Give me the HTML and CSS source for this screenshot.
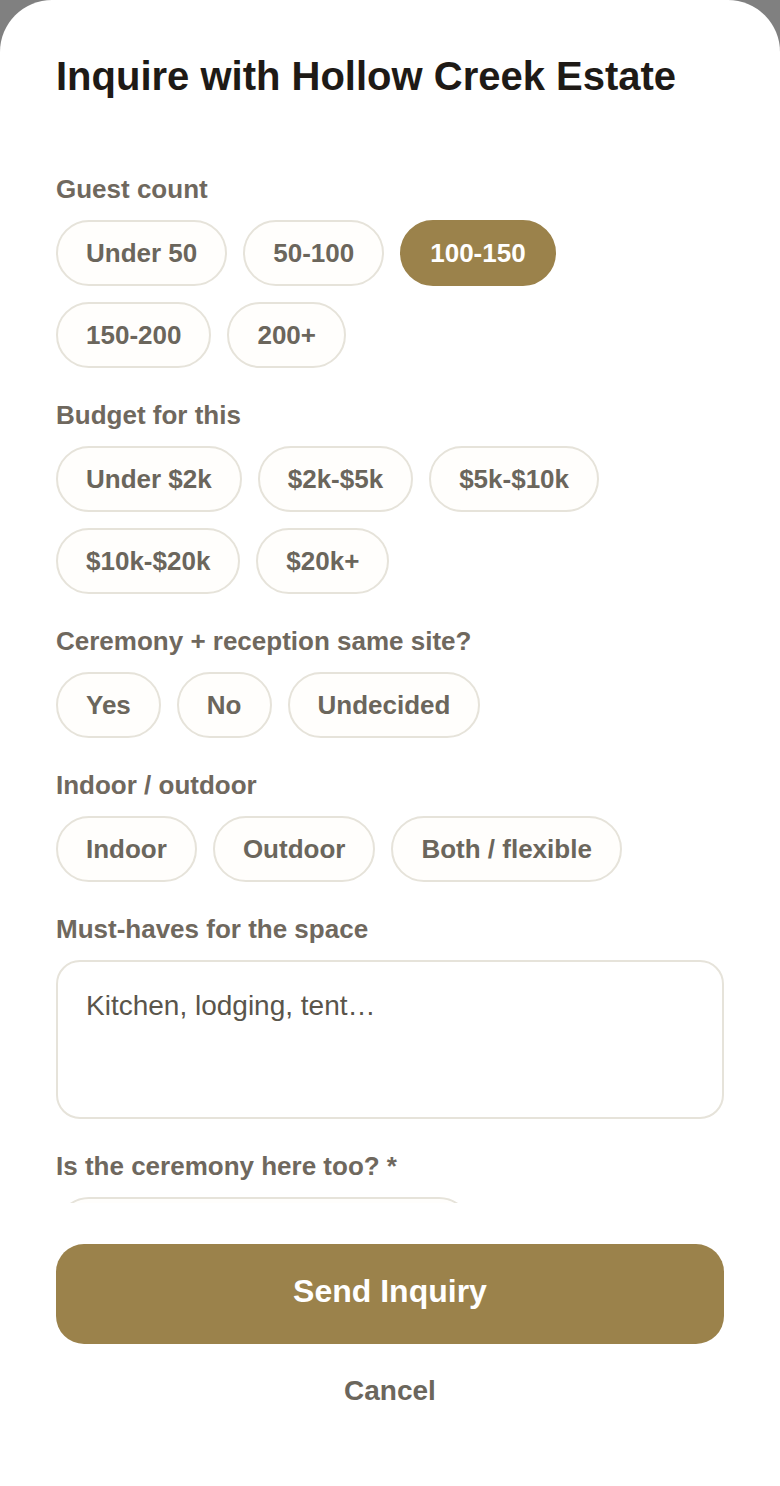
FILE: index.html
```html
<!DOCTYPE html>
<html lang="en">
<head>
<meta charset="utf-8">
<title>Inquire with Hollow Creek Estate</title>
<link rel="stylesheet" href="styles.css">
</head>
<body>
<div class="sheet">
  <header class="sheet-header">
    <h1 class="title">Inquire with Hollow Creek Estate</h1>
  </header>
  <div class="sheet-body">
    <section class="field">
      <div class="label">Guest count</div>
      <div class="chips">
        <span class="chip">Under 50</span>
        <span class="chip">50-100</span>
        <span class="chip chip-on">100-150</span>
        <span class="chip">150-200</span>
        <span class="chip">200+</span>
      </div>
    </section>
    <section class="field">
      <div class="label">Budget for this</div>
      <div class="chips">
        <span class="chip">Under $2k</span>
        <span class="chip">$2k-$5k</span>
        <span class="chip">$5k-$10k</span>
        <span class="chip">$10k-$20k</span>
        <span class="chip">$20k+</span>
      </div>
    </section>
    <section class="field">
      <div class="label">Ceremony + reception same site?</div>
      <div class="chips">
        <span class="chip">Yes</span>
        <span class="chip">No</span>
        <span class="chip">Undecided</span>
      </div>
    </section>
    <section class="field">
      <div class="label">Indoor / outdoor</div>
      <div class="chips">
        <span class="chip">Indoor</span>
        <span class="chip">Outdoor</span>
        <span class="chip">Both / flexible</span>
      </div>
    </section>
    <section class="field">
      <div class="label">Must-haves for the space</div>
      <div class="textarea">Kitchen, lodging, tent…</div>
    </section>
    <section class="field">
      <div class="label">Is the ceremony here too? *</div>
      <div class="chips">
        <span class="chip chip-wide"></span>
      </div>
    </section>
  </div>
  <footer class="sheet-footer">
    <button class="primary">Send Inquiry</button>
    <button class="cancel">Cancel</button>
  </footer>
</div>
</body>
</html>
```

FILE: styles.css
```css
html, body {
  margin: 0;
  padding: 0;
}
body {
  background: #808080;
  font-family: "Liberation Sans", Arial, sans-serif;
}
.sheet {
  width: 780px;
  height: 1486px;
  background: #ffffff;
  border-radius: 52px 52px 0 0;
  display: flex;
  flex-direction: column;
  box-sizing: border-box;
}
.sheet-header {
  padding: 52px 56px 0;
}
.title {
  margin: 0;
  font-size: 40px;
  line-height: 48px;
  font-weight: 700;
  color: #1e1a16;
}
.sheet-body {
  margin-top: 74px;
  padding: 0 56px;
  height: 1029px;
  overflow: hidden;
  box-sizing: border-box;
  display: flex;
  flex-direction: column;
  gap: 32px;
  flex: none;
}
.label {
  font-size: 26px;
  line-height: 30px;
  font-weight: 700;
  color: #6f685e;
  margin-bottom: 16px;
}
.chips {
  display: flex;
  flex-wrap: wrap;
  gap: 16px;
}
.chip {
  display: inline-flex;
  align-items: center;
  height: 66px;
  box-sizing: border-box;
  padding: 0 28px;
  border: 2px solid #e6e3da;
  border-radius: 33px;
  background: #fffefc;
  font-size: 26px;
  font-weight: 700;
  color: #6b665c;
  white-space: nowrap;
}
.chip-on {
  background: #9b824b;
  border-color: #9b824b;
  color: #ffffff;
}
.chip-wide {
  width: 416px;
}
.textarea {
  height: 159px;
  box-sizing: border-box;
  border: 2px solid #e6e3da;
  border-radius: 24px;
  padding: 26px 28px;
  font-size: 28px;
  line-height: 36px;
  color: #5a554b;
}
.sheet-footer {
  padding: 41px 56px 0;
  display: flex;
  flex-direction: column;
  align-items: stretch;
}
.primary {
  height: 100px;
  border: none;
  border-radius: 28px;
  background: #9b824b;
  color: #ffffff;
  font-family: "Liberation Sans", Arial, sans-serif;
  font-size: 32px;
  font-weight: 700;
  padding: 0 0 5px;
}
.cancel {
  margin-top: 30px;
  border: none;
  background: none;
  padding: 0;
  font-family: "Liberation Sans", Arial, sans-serif;
  font-size: 28px;
  line-height: 34px;
  font-weight: 700;
  color: #6b665c;
}
```
